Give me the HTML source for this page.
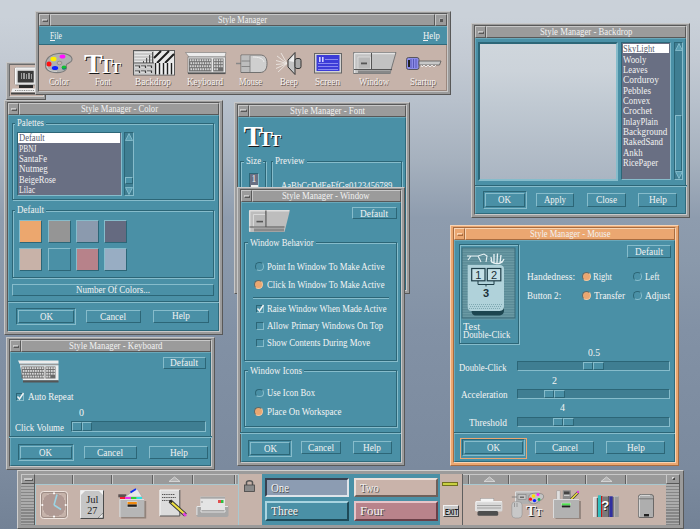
<!DOCTYPE html><html><head><meta charset="utf-8"><style>
html,body{margin:0;padding:0;width:700px;height:529px;overflow:hidden;}
body{position:relative;background:linear-gradient(to bottom,#cad1d9 0px,#cad1d9 17px,#c3cad3 60px,#b8c1cc 100px,#a6b1be 160px,#8e9cae 218px,#8a99ab 260px,#8291a5 330px,#7b8a9e 470px,#738296 529px);}
div,span,svg{position:absolute;box-sizing:border-box;}
.t{white-space:nowrap;display:block;}

</style></head><body>
<div style="left:6px;top:61.5px;width:40px;height:38px;background:#9b9b9b;border:1px solid;border-color:#c8c8c8 #585858 #585858 #c8c8c8;"></div>
<div style="left:8.5px;top:63.5px;width:35px;height:33.5px;background:#c6b3aa;border:1px solid;border-color:#6a6a6a #d0d0d0 #d0d0d0 #6a6a6a;"></div>
<svg style="left:9px;top:66px;overflow:visible" width="30" height="30" viewBox="0 0 30 30">
<rect x="6" y="1.5" width="21" height="17.5" rx="1.5" fill="#e2e2e2" stroke="#777" stroke-width="0.7"/>
<path d="M6.5 18.5 V2 H26.5" stroke="#fafafa" stroke-width="1" fill="none"/>
<rect x="8.7" y="4.8" width="16" height="11.7" fill="#3a3a3a"/>
<g fill="#9a9a9a"><rect x="12" y="7" width="1" height="6"/><rect x="14" y="7" width="2" height="6"/><rect x="17" y="8" width="1" height="5"/><rect x="19" y="7" width="2" height="6"/><rect x="22" y="8" width="1" height="5"/></g>
<rect x="10" y="19" width="14" height="3" fill="#2a2a2a"/>
<path d="M3.5 22.6 H27 V26.5 H2 Z" fill="#f0f0f0"/>
<path d="M6 24.5 H25" stroke="#888" stroke-width="1" stroke-dasharray="1 0.8"/>
<rect x="2" y="26.5" width="25" height="2" fill="#444"/>
</svg>
<div style="left:35px;top:11px;width:416px;height:84px;background:#9b9b9b;border:1px solid;border-color:#c8c8c8 #585858 #585858 #c8c8c8;"></div>
<div style="left:38px;top:13px;width:410px;height:79px;background:#9b9b9b;border:1px solid;border-color:#585858 #c8c8c8 #c8c8c8 #585858;"></div>
<div style="left:39px;top:14px;width:11px;height:12px;background:#9b9b9b;border:1px solid;border-color:#c8c8c8 #585858 #585858 #c8c8c8;"></div>
<div style="left:41.5px;top:18.8px;width:6.5px;height:3px;background:#9b9b9b;border:1px solid;border-color:#c8c8c8 #585858 #585858 #c8c8c8;"></div>
<div style="left:50px;top:14px;width:385px;height:12px;background:#9b9b9b;border:1px solid;border-color:#c8c8c8 #585858 #585858 #c8c8c8;"></div>
<div style="left:435px;top:14px;width:12px;height:12px;background:#9b9b9b;border:1px solid;border-color:#c8c8c8 #585858 #585858 #c8c8c8;"></div>
<div style="left:439.5px;top:18.5px;width:3px;height:3px;background:#585858;box-shadow:-0.5px -0.5px 0 #c8c8c8;"></div>
<span id="t1" class="t" style="left:218.00px;top:15.45px;font-size:10.5px;line-height:10.5px;font-family:'Liberation Serif', serif;color:#f2f2f2;font-weight:normal;transform-origin:0 0;transform:scaleX(0.7963);">Style Manager</span>
<div style="left:39px;top:26px;width:408px;height:19px;background:#4a90a6;border-top:1px solid #6aa8ba;border-bottom:1px solid #2f6a7c;"></div>
<span id="t2" class="t" style="left:50.30px;top:30.65px;font-size:10.5px;line-height:10.5px;font-family:'Liberation Serif', serif;color:#f4f4f4;font-weight:normal;transform-origin:0 0;transform:scaleX(0.7342);">File</span>
<div style="left:50.3px;top:40px;width:5px;height:1px;background:#f2f2f2;"></div>
<span id="t3" class="t" style="left:423.00px;top:30.65px;font-size:10.5px;line-height:10.5px;font-family:'Liberation Serif', serif;color:#f4f4f4;font-weight:normal;transform-origin:0 0;transform:scaleX(0.8324);">Help</span>
<div style="left:423px;top:40px;width:5px;height:1px;background:#f2f2f2;"></div>
<div style="left:39px;top:45px;width:408px;height:46px;background:#c6b3aa;border-right:1px solid #9a877e;border-bottom:1px solid #9a877e;"></div>
<span id="t4" class="t" style="left:49.00px;top:77.20px;font-size:10px;line-height:10px;font-family:'Liberation Serif', serif;color:#f6f2f0;font-weight:normal;transform-origin:0 0;transform:scaleX(0.8779);text-shadow:0.8px 0.8px 0 #6a5a54;">Color</span>
<span id="t5" class="t" style="left:95.00px;top:77.20px;font-size:10px;line-height:10px;font-family:'Liberation Serif', serif;color:#f6f2f0;font-weight:normal;transform-origin:0 0;transform:scaleX(0.8722);text-shadow:0.8px 0.8px 0 #6a5a54;">Font</span>
<span id="t6" class="t" style="left:135.00px;top:77.20px;font-size:10px;line-height:10px;font-family:'Liberation Serif', serif;color:#f6f2f0;font-weight:normal;transform-origin:0 0;transform:scaleX(0.9257);text-shadow:0.8px 0.8px 0 #6a5a54;">Backdrop</span>
<span id="t7" class="t" style="left:187.00px;top:77.20px;font-size:10px;line-height:10px;font-family:'Liberation Serif', serif;color:#f6f2f0;font-weight:normal;transform-origin:0 0;transform:scaleX(0.9128);text-shadow:0.8px 0.8px 0 #6a5a54;">Keyboard</span>
<span id="t8" class="t" style="left:239.00px;top:77.20px;font-size:10px;line-height:10px;font-family:'Liberation Serif', serif;color:#f6f2f0;font-weight:normal;transform-origin:0 0;transform:scaleX(0.8445);text-shadow:0.8px 0.8px 0 #6a5a54;">Mouse</span>
<span id="t9" class="t" style="left:279.50px;top:77.20px;font-size:10px;line-height:10px;font-family:'Liberation Serif', serif;color:#f6f2f0;font-weight:normal;transform-origin:0 0;transform:scaleX(0.8760);text-shadow:0.8px 0.8px 0 #6a5a54;">Beep</span>
<span id="t10" class="t" style="left:314.50px;top:77.20px;font-size:10px;line-height:10px;font-family:'Liberation Serif', serif;color:#f6f2f0;font-weight:normal;transform-origin:0 0;transform:scaleX(0.9185);text-shadow:0.8px 0.8px 0 #6a5a54;">Screen</span>
<span id="t11" class="t" style="left:359.00px;top:77.20px;font-size:10px;line-height:10px;font-family:'Liberation Serif', serif;color:#f6f2f0;font-weight:normal;transform-origin:0 0;transform:scaleX(0.8811);text-shadow:0.8px 0.8px 0 #6a5a54;">Window</span>
<span id="t12" class="t" style="left:410.00px;top:77.20px;font-size:10px;line-height:10px;font-family:'Liberation Serif', serif;color:#f6f2f0;font-weight:normal;transform-origin:0 0;transform:scaleX(0.8999);text-shadow:0.8px 0.8px 0 #6a5a54;">Startup</span>
<svg style="left:44px;top:52px;overflow:visible" width="30" height="22" viewBox="0 0 30 22">
<path d="M14 1.5 C22 0.8 28.5 3.5 28 8 C27.6 10.5 24 10.8 22.5 12.5 C21.5 13.8 23.5 15.5 22 17.5 C20 20 15 21 10 20.5 C4 20 1 17 1.5 12 C2 6 7 2 14 1.5 Z" fill="#b0b0b0" stroke="#7a7a7a" stroke-width="1.1"/>
<path d="M3 14 C3 18 8 19.5 13 19.5" stroke="#d8d8d8" stroke-width="0.8" fill="none"/>
<ellipse cx="15.5" cy="11" rx="2.4" ry="1.8" fill="#c6b3aa" stroke="#7a7a7a" stroke-width="0.6"/>
<ellipse cx="9.5" cy="7" rx="3" ry="2.3" fill="#ffee00"/>
<ellipse cx="18.5" cy="4.6" rx="2.9" ry="2" fill="#ff10ff"/>
<ellipse cx="5" cy="12" rx="2.5" ry="2.5" fill="#ff1010"/>
<ellipse cx="11" cy="16" rx="3.2" ry="2.1" fill="#1020ff"/>
<ellipse cx="20" cy="15.5" rx="2.4" ry="2" fill="#10c030"/>
<path d="M18 16.5 C19 17.5 21 17.5 22 16" stroke="#1a5a9a" stroke-width="0.8" fill="none"/>
</svg>
<svg style="left:83px;top:50px;overflow:visible" width="42" height="26" viewBox="0 0 42 26"><text x="2" y="24" font-family="Liberation Serif" font-weight="bold" font-size="28" fill="#1a1a1a">T</text><text x="17.5" y="24" font-family="Liberation Serif" font-weight="bold" font-size="20" fill="#1a1a1a">T</text><text x="29" y="24" font-family="Liberation Serif" font-weight="bold" font-size="15" fill="#1a1a1a">T</text><text x="1" y="23" font-family="Liberation Serif" font-weight="bold" font-size="28" fill="#ffffff">T</text><text x="16.5" y="23" font-family="Liberation Serif" font-weight="bold" font-size="20" fill="#ffffff">T</text><text x="28" y="23" font-family="Liberation Serif" font-weight="bold" font-size="15" fill="#ffffff">T</text></svg>
<svg style="left:132.5px;top:50.3px;overflow:visible" width="42" height="25.5" viewBox="0 0 42 25.5">
<rect x="0.5" y="0.5" width="41" height="24.5" fill="#c4c4c4" stroke="#5a5a5a"/>
<rect x="1" y="1" width="20" height="12" fill="#c8c8c8"/>
<g stroke="#e6e6e6" stroke-width="1"><path d="M1.5 2.5 H20 M1.5 5.5 H20 M1.5 8.5 H20 M1.5 11.5 H20"/></g>
<g fill="#555"><rect x="10" y="11" width="1" height="2"/><rect x="13" y="8" width="1.2" height="5"/><rect x="16" y="5" width="1.2" height="8"/><rect x="19" y="2" width="1.2" height="11"/></g>
<rect x="1" y="12.6" width="20" height="1" fill="#444"/>
<rect x="1" y="13.6" width="20" height="11" fill="#cacaca"/>
<g stroke="#3a3a3a" stroke-width="1.1" fill="none"><path d="M2 16 H6.5 V18 M8 16 H12.5 V18 M14 16 H18.5 V18 M2 21 H6.5 V23 M8 21 H12.5 V23 M14 21 H18.5 V23"/></g>
<g stroke="#f0f0f0" stroke-width="0.8" fill="none"><path d="M2 17 H5.5 M8 17 H11.5 M14 17 H17.5 M2 22 H5.5 M8 22 H11.5 M14 22 H17.5"/></g>
<rect x="21" y="1" width="20" height="12" fill="#e8e8e8"/>
<g stroke="#1e1e1e" stroke-width="2"><path d="M21 8 L28 1 M24 13 L36 1 M32 13 L41 4"/></g>
<rect x="21" y="13" width="20" height="11.5" fill="#f0f0f0"/>
<g stroke="#1e1e1e" stroke-width="1.4"><path d="M22.5 13 V24.5 M26.5 13 V24.5 M30.5 13 V24.5 M34.5 13 V24.5 M38.5 13 V24.5"/></g>
</svg>
<svg style="left:184.5px;top:52px;overflow:visible" width="42" height="23" viewBox="0 0 42 23">
<path d="M0.5 0.5 H41 L40 5 H4 Z" fill="#ececec" stroke="#777" stroke-width="0.6"/>
<rect x="3" y="5" width="37.5" height="16" fill="#e8e8e8" stroke="#666" stroke-width="0.6"/>
<rect x="4" y="6.5" width="22.5" height="13" fill="#6e6e6e"/>
<rect x="28.2" y="6.5" width="10.3" height="13" fill="#6e6e6e"/>
<g fill="#d4d4d4"><rect x="4.80" y="7.20" width="1.6" height="2"/><rect x="7.20" y="7.20" width="1.6" height="2"/><rect x="9.60" y="7.20" width="1.6" height="2"/><rect x="12.00" y="7.20" width="1.6" height="2"/><rect x="14.40" y="7.20" width="1.6" height="2"/><rect x="16.80" y="7.20" width="1.6" height="2"/><rect x="19.20" y="7.20" width="1.6" height="2"/><rect x="21.60" y="7.20" width="1.6" height="2"/><rect x="24.00" y="7.20" width="1.6" height="2"/><rect x="29.00" y="7.20" width="1.6" height="2"/><rect x="31.40" y="7.20" width="1.6" height="2"/><rect x="33.80" y="7.20" width="1.6" height="2"/><rect x="36.20" y="7.20" width="1.6" height="2"/><rect x="5.40" y="10.20" width="1.6" height="2"/><rect x="7.80" y="10.20" width="1.6" height="2"/><rect x="10.20" y="10.20" width="1.6" height="2"/><rect x="12.60" y="10.20" width="1.6" height="2"/><rect x="15.00" y="10.20" width="1.6" height="2"/><rect x="17.40" y="10.20" width="1.6" height="2"/><rect x="19.80" y="10.20" width="1.6" height="2"/><rect x="22.20" y="10.20" width="1.6" height="2"/><rect x="24.60" y="10.20" width="1.6" height="2"/><rect x="29.00" y="10.20" width="1.6" height="2"/><rect x="31.40" y="10.20" width="1.6" height="2"/><rect x="33.80" y="10.20" width="1.6" height="2"/><rect x="36.20" y="10.20" width="1.6" height="2"/><rect x="4.80" y="13.20" width="1.6" height="2"/><rect x="7.20" y="13.20" width="1.6" height="2"/><rect x="9.60" y="13.20" width="1.6" height="2"/><rect x="12.00" y="13.20" width="1.6" height="2"/><rect x="14.40" y="13.20" width="1.6" height="2"/><rect x="16.80" y="13.20" width="1.6" height="2"/><rect x="19.20" y="13.20" width="1.6" height="2"/><rect x="21.60" y="13.20" width="1.6" height="2"/><rect x="24.00" y="13.20" width="1.6" height="2"/><rect x="29.00" y="13.20" width="1.6" height="2"/><rect x="31.40" y="13.20" width="1.6" height="2"/><rect x="33.80" y="13.20" width="1.6" height="2"/><rect x="36.20" y="13.20" width="1.6" height="2"/><rect x="5.40" y="16.20" width="1.6" height="2"/><rect x="7.80" y="16.20" width="1.6" height="2"/><rect x="10.20" y="16.20" width="1.6" height="2"/><rect x="12.60" y="16.20" width="1.6" height="2"/><rect x="15.00" y="16.20" width="1.6" height="2"/><rect x="17.40" y="16.20" width="1.6" height="2"/><rect x="19.80" y="16.20" width="1.6" height="2"/><rect x="22.20" y="16.20" width="1.6" height="2"/><rect x="24.60" y="16.20" width="1.6" height="2"/><rect x="29.00" y="16.20" width="1.6" height="2"/><rect x="31.40" y="16.20" width="1.6" height="2"/></g>
<rect x="3" y="20.5" width="37.5" height="1.6" fill="#555"/>
</svg>
<svg style="left:235.5px;top:53.5px;overflow:visible" width="32" height="20" viewBox="0 0 32 20">
<path d="M0 9.5 H6" stroke="#888" stroke-width="1.5"/>
<path d="M5 1 H24 C29 1 31 4 31 9.5 C31 15 29 18.5 24 18.5 H5 Z" fill="#cfcfcf" stroke="#666" stroke-width="0.9"/>
<path d="M5.5 1.5 H14 V18 H5.5 Z" fill="#bdbdbd"/>
<path d="M5.5 7 H14 M5.5 12.5 H14 M14 1.5 V18" stroke="#777" stroke-width="0.8" fill="none"/>
<path d="M17 3 C22 3 27 4 28 8" stroke="#eee" stroke-width="1" fill="none"/>
</svg>
<svg style="left:276px;top:52px;overflow:visible" width="26" height="23" viewBox="0 0 26 23">
<g stroke="#f0ece8" stroke-width="0.8" fill="none"><path d="M11 11.5 L1 4 M11 11.5 L0 8.5 M11 11.5 L0 12.5 M11 11.5 L0 16.5 M11 11.5 L2 20 M11 11.5 L5 1"/></g>
<path d="M12 8 L19 0.5 L19 22.5 L12 15 Z" fill="#c4c4c4" stroke="#333" stroke-width="1"/>
<path d="M13 9 L18 3 L18 10 Z" fill="#eee"/>
<rect x="19" y="6.5" width="6" height="10" rx="2" fill="#aaa" stroke="#333" stroke-width="1"/>
</svg>
<svg style="left:313.5px;top:52.5px;overflow:visible" width="28" height="20" viewBox="0 0 28 20">
<rect x="0.5" y="0.5" width="27" height="19.5" fill="#d4d4d4" stroke="#666"/>
<rect x="2.5" y="2" width="23" height="16" fill="#3c3cd8"/>
<g fill="#d0d0ff"><rect x="5" y="4" width="1.6" height="5"/><rect x="8" y="4" width="1.6" height="5"/></g>
<g fill="#8a8af0"><rect x="11" y="6" width="13" height="1"/><rect x="4" y="10" width="20" height="1"/><rect x="4" y="13" width="20" height="1"/><rect x="4" y="16" width="20" height="1"/></g>
</svg>
<svg style="left:352.5px;top:52px;overflow:visible" width="44" height="22" viewBox="0 0 44 22">
<path d="M0.5 0.5 H43 L37 21.5 H0.5 Z" fill="#c2c2c2" stroke="#777" stroke-width="1"/>
<path d="M1.5 1.5 H42 M1.5 1.5 V21" stroke="#e4e4e4" stroke-width="1.5"/>
<path d="M5 5 H17.5 V17 H5 Z" fill="#b8b8b8" stroke="#e0e0e0" stroke-width="0.8"/>
<rect x="8" y="10.5" width="6" height="1.8" fill="#555"/>
<rect x="18" y="1" width="1" height="16.5" fill="#555"/>
<rect x="1" y="17" width="38" height="1" fill="#555"/>
<rect x="5" y="18.5" width="33" height="3" fill="#888"/>
</svg>
<svg style="left:406px;top:56.5px;overflow:visible" width="36" height="13" viewBox="0 0 36 13">
<rect x="0.5" y="0.5" width="12.5" height="12" rx="2" fill="#8c8ce8" stroke="#444" stroke-width="0.8"/>
<g stroke="#5858b8" stroke-width="1"><path d="M5 2 V11 M7.5 2 V11 M10 2 V11"/></g>
<rect x="2" y="3" width="2" height="7" fill="#222"/>
<path d="M13 4 H35 L33.5 8 H13 Z" fill="#c8c8c8" stroke="#555" stroke-width="0.8"/>
<path d="M15 8 L16 10 L18 8 L20 10 L22 8 L24 10 L26 8 L28 10 L30 8" stroke="#f0f0f0" fill="none" stroke-width="0.9"/>
</svg>
<div style="left:471px;top:23px;width:219px;height:195px;background:#9b9b9b;border:1px solid;border-color:#c8c8c8 #585858 #585858 #c8c8c8;"></div>
<div style="left:474px;top:25px;width:213px;height:190px;background:#9b9b9b;border:1px solid;border-color:#585858 #c8c8c8 #c8c8c8 #585858;"></div>
<div style="left:475px;top:26px;width:11px;height:11.5px;background:#9b9b9b;border:1px solid;border-color:#c8c8c8 #585858 #585858 #c8c8c8;"></div>
<div style="left:477.5px;top:30.55px;width:6.5px;height:3px;background:#9b9b9b;border:1px solid;border-color:#c8c8c8 #585858 #585858 #c8c8c8;"></div>
<div style="left:486px;top:26px;width:200px;height:11.5px;background:#9b9b9b;border:1px solid;border-color:#c8c8c8 #585858 #585858 #c8c8c8;"></div>
<span id="t13" class="t" style="left:539.75px;top:27.20px;font-size:10.5px;line-height:10.5px;font-family:'Liberation Serif', serif;color:#f2f2f2;font-weight:normal;transform-origin:0 0;transform:scaleX(0.8326);">Style Manager - Backdrop</span>
<div style="left:475px;top:37.5px;width:211px;height:176.5px;background:#4a90a6;"></div>
<div style="left:475px;top:37.5px;width:211px;height:176.5px;border:1px solid;border-color:#6aa8ba #2f6a7c #2f6a7c #6aa8ba;"></div>
<div style="left:478px;top:41.5px;width:139.5px;height:139.5px;border:2px solid;border-color:#2c6677 #86bccb #86bccb #2c6677;"></div>
<div style="left:480px;top:43.5px;width:135.5px;height:135.5px;background:linear-gradient(to bottom,#cfd6dc 0%,#ccd3da 20%,#c0c9d2 45%,#b4bec9 75%,#aab5c2 100%);"></div>
<div style="left:620.5px;top:42px;width:50.5px;height:138px;background:#696f83;border:1px solid;border-color:#2c6677 #86bccb #86bccb #2c6677;"></div>
<div style="left:622.5px;top:44px;width:46.2px;height:8.8px;background:#ffffff;"></div>
<span id="t14" class="t" style="left:622.50px;top:44.15px;font-size:10.5px;line-height:10.5px;font-family:'Liberation Serif', serif;color:#555a6c;font-weight:normal;transform-origin:0 0;transform:scaleX(0.8058);">SkyLight</span>
<span id="t15" class="t" style="left:622.50px;top:54.50px;font-size:10.5px;line-height:10.5px;font-family:'Liberation Serif', serif;color:#f2f2f2;font-weight:normal;transform-origin:0 0;transform:scaleX(0.8432);">Wooly</span>
<span id="t16" class="t" style="left:622.50px;top:64.85px;font-size:10.5px;line-height:10.5px;font-family:'Liberation Serif', serif;color:#f2f2f2;font-weight:normal;transform-origin:0 0;transform:scaleX(0.8240);">Leaves</span>
<span id="t17" class="t" style="left:622.50px;top:75.20px;font-size:10.5px;line-height:10.5px;font-family:'Liberation Serif', serif;color:#f2f2f2;font-weight:normal;transform-origin:0 0;transform:scaleX(0.8944);">Corduroy</span>
<span id="t18" class="t" style="left:622.50px;top:85.55px;font-size:10.5px;line-height:10.5px;font-family:'Liberation Serif', serif;color:#f2f2f2;font-weight:normal;transform-origin:0 0;transform:scaleX(0.8570);">Pebbles</span>
<span id="t19" class="t" style="left:622.50px;top:95.90px;font-size:10.5px;line-height:10.5px;font-family:'Liberation Serif', serif;color:#f2f2f2;font-weight:normal;transform-origin:0 0;transform:scaleX(0.8264);">Convex</span>
<span id="t20" class="t" style="left:622.50px;top:106.25px;font-size:10.5px;line-height:10.5px;font-family:'Liberation Serif', serif;color:#f2f2f2;font-weight:normal;transform-origin:0 0;transform:scaleX(0.8722);">Crochet</span>
<span id="t21" class="t" style="left:622.50px;top:116.60px;font-size:10.5px;line-height:10.5px;font-family:'Liberation Serif', serif;color:#f2f2f2;font-weight:normal;transform-origin:0 0;transform:scaleX(0.8107);">InlayPlain</span>
<span id="t22" class="t" style="left:622.50px;top:126.95px;font-size:10.5px;line-height:10.5px;font-family:'Liberation Serif', serif;color:#f2f2f2;font-weight:normal;transform-origin:0 0;transform:scaleX(0.8631);">Background</span>
<span id="t23" class="t" style="left:622.50px;top:137.30px;font-size:10.5px;line-height:10.5px;font-family:'Liberation Serif', serif;color:#f2f2f2;font-weight:normal;transform-origin:0 0;transform:scaleX(0.8363);">RakedSand</span>
<span id="t24" class="t" style="left:622.50px;top:147.65px;font-size:10.5px;line-height:10.5px;font-family:'Liberation Serif', serif;color:#f2f2f2;font-weight:normal;transform-origin:0 0;transform:scaleX(0.8396);">Ankh</span>
<span id="t25" class="t" style="left:622.50px;top:158.00px;font-size:10.5px;line-height:10.5px;font-family:'Liberation Serif', serif;color:#f2f2f2;font-weight:normal;transform-origin:0 0;transform:scaleX(0.8110);">RicePaper</span>
<div style="left:673.5px;top:42px;width:9.5px;height:138px;background:#3f7e92;border:1px solid;border-color:#2c6677 #86bccb #86bccb #2c6677;"></div>
<svg style="left:674.5px;top:43px;overflow:visible" width="8" height="8" viewBox="0 0 8 8"><path d="M0.5 7.5 L4 0.5 L7.5 7.5 Z" fill="#5a9fb3" stroke="#8cc2d0" stroke-width="0.8"/></svg>
<div style="left:674.5px;top:115px;width:7.5px;height:56px;background:#4a90a6;border:1px solid;border-color:#86bccb #2c6677 #2c6677 #86bccb;"></div>
<svg style="left:674.5px;top:171px;overflow:visible" width="8" height="8" viewBox="0 0 8 8"><path d="M0.5 0.5 L4 7.5 L7.5 0.5 Z" fill="#5a9fb3" stroke="#8cc2d0" stroke-width="0.8"/></svg>
<div style="left:475px;top:184.5px;width:212px;height:2px;border-top:1px solid #2c6677;border-bottom:1px solid #86bccb;"></div>
<div style="left:483px;top:191px;width:43.5px;height:17.8px;border:1px solid;border-color:#2c6677 #86bccb #86bccb #2c6677;"></div>
<div style="left:485px;top:193px;width:39.5px;height:13.8px;background:#4a90a6;border:1px solid;border-color:#86bccb #2c6677 #2c6677 #86bccb;"></div>
<span id="t26" class="t" style="left:498.25px;top:195.35px;font-size:10.5px;line-height:10.5px;font-family:'Liberation Serif', serif;color:#f2f2f2;font-weight:normal;transform-origin:0 0;transform:scaleX(0.8568);">OK</span>
<div style="left:536px;top:193px;width:38px;height:13.5px;background:#4a90a6;border:1px solid;border-color:#86bccb #2c6677 #2c6677 #86bccb;"></div>
<span id="t27" class="t" style="left:544.00px;top:195.20px;font-size:10.5px;line-height:10.5px;font-family:'Liberation Serif', serif;color:#f2f2f2;font-weight:normal;transform-origin:0 0;transform:scaleX(0.8381);">Apply</span>
<div style="left:587px;top:193px;width:38.5px;height:13.5px;background:#4a90a6;border:1px solid;border-color:#86bccb #2c6677 #2c6677 #86bccb;"></div>
<span id="t28" class="t" style="left:595.75px;top:195.20px;font-size:10.5px;line-height:10.5px;font-family:'Liberation Serif', serif;color:#f2f2f2;font-weight:normal;transform-origin:0 0;transform:scaleX(0.8779);">Close</span>
<div style="left:638px;top:193px;width:39px;height:13.5px;background:#4a90a6;border:1px solid;border-color:#86bccb #2c6677 #2c6677 #86bccb;"></div>
<span id="t29" class="t" style="left:648.50px;top:195.20px;font-size:10.5px;line-height:10.5px;font-family:'Liberation Serif', serif;color:#f2f2f2;font-weight:normal;transform-origin:0 0;transform:scaleX(0.8814);">Help</span>
<div style="left:4px;top:100px;width:219px;height:234.5px;background:#9b9b9b;border:1px solid;border-color:#c8c8c8 #585858 #585858 #c8c8c8;"></div>
<div style="left:7px;top:102px;width:213px;height:229.5px;background:#9b9b9b;border:1px solid;border-color:#585858 #c8c8c8 #c8c8c8 #585858;"></div>
<div style="left:8px;top:103px;width:11px;height:12px;background:#9b9b9b;border:1px solid;border-color:#c8c8c8 #585858 #585858 #c8c8c8;"></div>
<div style="left:10.5px;top:107.8px;width:6.5px;height:3px;background:#9b9b9b;border:1px solid;border-color:#c8c8c8 #585858 #585858 #c8c8c8;"></div>
<div style="left:19px;top:103px;width:200px;height:12px;background:#9b9b9b;border:1px solid;border-color:#c8c8c8 #585858 #585858 #c8c8c8;"></div>
<span id="t30" class="t" style="left:80.50px;top:104.45px;font-size:10.5px;line-height:10.5px;font-family:'Liberation Serif', serif;color:#f2f2f2;font-weight:normal;transform-origin:0 0;transform:scaleX(0.8175);">Style Manager - Color</span>
<div style="left:8px;top:115px;width:211px;height:215.5px;background:#4a90a6;"></div>
<div style="left:8px;top:115px;width:211px;height:215.5px;border:1px solid;border-color:#6aa8ba #2f6a7c #2f6a7c #6aa8ba;"></div>
<div style="left:12px;top:122.5px;width:201.5px;height:77px;border:1px solid #2c6677;box-shadow:1px 1px 0 #86bccb, inset 1px 1px 0 #86bccb;"></div>
<div style="left:15px;top:118.5px;width:31px;height:8px;background:#4a90a6;"></div>
<span id="t31" class="t" style="left:17.00px;top:117.95px;font-size:10.5px;line-height:10.5px;font-family:'Liberation Serif', serif;color:#f2f2f2;font-weight:normal;transform-origin:0 0;transform:scaleX(0.8264);">Palettes</span>
<div style="left:17px;top:132px;width:105px;height:64px;background:#696f83;border:1px solid;border-color:#2c6677 #86bccb #86bccb #2c6677;"></div>
<div style="left:18px;top:133px;width:102px;height:9.5px;background:#ffffff;"></div>
<span id="t32" class="t" style="left:18.75px;top:133.05px;font-size:10.5px;line-height:10.5px;font-family:'Liberation Serif', serif;color:#555a6c;font-weight:normal;transform-origin:0 0;transform:scaleX(0.8175);">Default</span>
<span id="t33" class="t" style="left:18.75px;top:143.50px;font-size:10.5px;line-height:10.5px;font-family:'Liberation Serif', serif;color:#f2f2f2;font-weight:normal;transform-origin:0 0;transform:scaleX(0.7138);">PBNJ</span>
<span id="t34" class="t" style="left:18.75px;top:153.95px;font-size:10.5px;line-height:10.5px;font-family:'Liberation Serif', serif;color:#f2f2f2;font-weight:normal;transform-origin:0 0;transform:scaleX(0.8277);">SantaFe</span>
<span id="t35" class="t" style="left:18.75px;top:164.40px;font-size:10.5px;line-height:10.5px;font-family:'Liberation Serif', serif;color:#f2f2f2;font-weight:normal;transform-origin:0 0;transform:scaleX(0.8499);">Nutmeg</span>
<span id="t36" class="t" style="left:18.75px;top:174.85px;font-size:10.5px;line-height:10.5px;font-family:'Liberation Serif', serif;color:#f2f2f2;font-weight:normal;transform-origin:0 0;transform:scaleX(0.8077);">BeigeRose</span>
<span id="t37" class="t" style="left:18.75px;top:185.30px;font-size:10.5px;line-height:10.5px;font-family:'Liberation Serif', serif;color:#f2f2f2;font-weight:normal;transform-origin:0 0;transform:scaleX(0.7531);">Lilac</span>
<div style="left:124.2px;top:132px;width:9.6px;height:64px;background:#3f7e92;border:1px solid;border-color:#2c6677 #86bccb #86bccb #2c6677;"></div>
<svg style="left:125.2px;top:133px;overflow:visible" width="8" height="8" viewBox="0 0 8 8"><path d="M0.5 7.5 L4 0.5 L7.5 7.5 Z" fill="#5a9fb3" stroke="#8cc2d0" stroke-width="0.8"/></svg>
<div style="left:125.2px;top:176.5px;width:7.6px;height:7px;background:#4a90a6;border:1px solid;border-color:#86bccb #2c6677 #2c6677 #86bccb;"></div>
<svg style="left:125.2px;top:187px;overflow:visible" width="8" height="8" viewBox="0 0 8 8"><path d="M0.5 0.5 L4 7.5 L7.5 0.5 Z" fill="#5a9fb3" stroke="#8cc2d0" stroke-width="0.8"/></svg>
<div style="left:12px;top:209.5px;width:201.5px;height:68px;border:1px solid #2c6677;box-shadow:1px 1px 0 #86bccb, inset 1px 1px 0 #86bccb;"></div>
<div style="left:15px;top:205.5px;width:31px;height:8px;background:#4a90a6;"></div>
<span id="t38" class="t" style="left:17.00px;top:204.95px;font-size:10.5px;line-height:10.5px;font-family:'Liberation Serif', serif;color:#f2f2f2;font-weight:normal;transform-origin:0 0;transform:scaleX(0.8571);">Default</span>
<div style="left:19px;top:219.5px;width:23px;height:23px;background:#eca76e;border:1px solid;border-color:#86bccb #2c6677 #2c6677 #86bccb;"></div>
<div style="left:19px;top:248px;width:23px;height:23px;background:#c8b2a8;border:1px solid;border-color:#86bccb #2c6677 #2c6677 #86bccb;"></div>
<div style="left:47.5px;top:219.5px;width:23px;height:23px;background:#959595;border:1px solid;border-color:#86bccb #2c6677 #2c6677 #86bccb;"></div>
<div style="left:47.5px;top:248px;width:23px;height:23px;background:#4a90a6;border:1px solid;border-color:#86bccb #2c6677 #2c6677 #86bccb;"></div>
<div style="left:76px;top:219.5px;width:23px;height:23px;background:#8b9aae;border:1px solid;border-color:#86bccb #2c6677 #2c6677 #86bccb;"></div>
<div style="left:76px;top:248px;width:23px;height:23px;background:#b7828a;border:1px solid;border-color:#86bccb #2c6677 #2c6677 #86bccb;"></div>
<div style="left:104px;top:219.5px;width:23px;height:23px;background:#656a80;border:1px solid;border-color:#86bccb #2c6677 #2c6677 #86bccb;"></div>
<div style="left:104px;top:248px;width:23px;height:23px;background:#98adc3;border:1px solid;border-color:#86bccb #2c6677 #2c6677 #86bccb;"></div>
<div style="left:12px;top:283.5px;width:201.5px;height:12.5px;background:#4a90a6;border:1px solid;border-color:#86bccb #2c6677 #2c6677 #86bccb;"></div>
<span id="t39" class="t" style="left:75.75px;top:285.20px;font-size:10.5px;line-height:10.5px;font-family:'Liberation Serif', serif;color:#f2f2f2;font-weight:normal;transform-origin:0 0;transform:scaleX(0.8543);">Number Of Colors...</span>
<div style="left:8px;top:300.5px;width:211px;height:2px;border-top:1px solid #2c6677;border-bottom:1px solid #86bccb;"></div>
<div style="left:16px;top:307.5px;width:60px;height:17.5px;border:1px solid;border-color:#2c6677 #86bccb #86bccb #2c6677;"></div>
<div style="left:18px;top:309.5px;width:56px;height:13.5px;background:#4a90a6;border:1px solid;border-color:#86bccb #2c6677 #2c6677 #86bccb;"></div>
<span id="t40" class="t" style="left:39.50px;top:311.70px;font-size:10.5px;line-height:10.5px;font-family:'Liberation Serif', serif;color:#f2f2f2;font-weight:normal;transform-origin:0 0;transform:scaleX(0.8568);">OK</span>
<div style="left:85.5px;top:309.5px;width:55.5px;height:13.5px;background:#4a90a6;border:1px solid;border-color:#86bccb #2c6677 #2c6677 #86bccb;"></div>
<span id="t41" class="t" style="left:100.25px;top:311.70px;font-size:10.5px;line-height:10.5px;font-family:'Liberation Serif', serif;color:#f2f2f2;font-weight:normal;transform-origin:0 0;transform:scaleX(0.8917);">Cancel</span>
<div style="left:153px;top:309.5px;width:55.5px;height:13px;background:#4a90a6;border:1px solid;border-color:#86bccb #2c6677 #2c6677 #86bccb;"></div>
<span id="t42" class="t" style="left:171.75px;top:311.45px;font-size:10.5px;line-height:10.5px;font-family:'Liberation Serif', serif;color:#f2f2f2;font-weight:normal;transform-origin:0 0;transform:scaleX(0.8814);">Help</span>
<div style="left:233.5px;top:101.5px;width:176px;height:192px;background:#9b9b9b;border:1px solid;border-color:#c8c8c8 #585858 #585858 #c8c8c8;"></div>
<div style="left:236.5px;top:103.5px;width:170px;height:187px;background:#9b9b9b;border:1px solid;border-color:#585858 #c8c8c8 #c8c8c8 #585858;"></div>
<div style="left:237.5px;top:104.5px;width:11px;height:12px;background:#9b9b9b;border:1px solid;border-color:#c8c8c8 #585858 #585858 #c8c8c8;"></div>
<div style="left:240.0px;top:109.3px;width:6.5px;height:3px;background:#9b9b9b;border:1px solid;border-color:#c8c8c8 #585858 #585858 #c8c8c8;"></div>
<div style="left:248.5px;top:104.5px;width:157px;height:12px;background:#9b9b9b;border:1px solid;border-color:#c8c8c8 #585858 #585858 #c8c8c8;"></div>
<span id="t43" class="t" style="left:289.50px;top:105.95px;font-size:10.5px;line-height:10.5px;font-family:'Liberation Serif', serif;color:#f2f2f2;font-weight:normal;transform-origin:0 0;transform:scaleX(0.8377);">Style Manager - Font</span>
<div style="left:237.5px;top:116.5px;width:168px;height:173px;background:#4a90a6;"></div>
<div style="left:237.5px;top:116.5px;width:168px;height:173px;border:1px solid;border-color:#6aa8ba #2f6a7c #2f6a7c #6aa8ba;"></div>
<svg style="left:243px;top:121px;overflow:visible" width="42" height="27" viewBox="0 0 42 27"><text x="1.5" y="25.5" font-family="Liberation Serif" font-weight="bold" font-size="29" fill="#1a1a1a">T</text><text x="16.5" y="25.5" font-family="Liberation Serif" font-weight="bold" font-size="21.5" fill="#1a1a1a">T</text><text x="28.5" y="25.5" font-family="Liberation Serif" font-weight="bold" font-size="16" fill="#1a1a1a">T</text><text x="0.5" y="24.5" font-family="Liberation Serif" font-weight="bold" font-size="29" fill="#ffffff">T</text><text x="15.5" y="24.5" font-family="Liberation Serif" font-weight="bold" font-size="21.5" fill="#ffffff">T</text><text x="27.5" y="24.5" font-family="Liberation Serif" font-weight="bold" font-size="16" fill="#ffffff">T</text></svg>
<div style="left:240px;top:161px;width:26px;height:40px;border:1px solid #2c6677;box-shadow:1px 1px 0 #86bccb, inset 1px 1px 0 #86bccb;"></div>
<div style="left:244px;top:157px;width:19px;height:8px;background:#4a90a6;"></div>
<span id="t44" class="t" style="left:246.00px;top:156.45px;font-size:10.5px;line-height:10.5px;font-family:'Liberation Serif', serif;color:#f2f2f2;font-weight:normal;transform-origin:0 0;transform:scaleX(0.8297);">Size</span>
<div style="left:270.5px;top:161px;width:131px;height:40px;border:1px solid #2c6677;box-shadow:1px 1px 0 #86bccb, inset 1px 1px 0 #86bccb;"></div>
<div style="left:273px;top:157px;width:33.5px;height:8px;background:#4a90a6;"></div>
<span id="t45" class="t" style="left:275.00px;top:156.45px;font-size:10.5px;line-height:10.5px;font-family:'Liberation Serif', serif;color:#f2f2f2;font-weight:normal;transform-origin:0 0;transform:scaleX(0.8570);">Preview</span>
<div style="left:249px;top:173px;width:10px;height:20px;background:#696f83;border:1px solid;border-color:#2c6677 #86bccb #86bccb #2c6677;"></div>
<span id="t46" class="t" style="left:251.50px;top:174.95px;font-size:9.5px;line-height:9.5px;font-family:'Liberation Serif', serif;color:#f2f2f2;font-weight:normal;">1</span>
<div style="left:250.5px;top:184.5px;width:7px;height:3px;background:#f0f0f0;"></div>
<span id="t47" class="t" style="left:280.60px;top:181.25px;font-size:10.5px;line-height:10.5px;font-family:'Liberation Serif', serif;color:#f4f4f4;font-weight:normal;transform-origin:0 0;transform:scaleX(0.8267);">AaBbCcDdEeFfGg0123456789</span>
<div style="left:237px;top:187px;width:167.5px;height:279px;background:#9b9b9b;border:1px solid;border-color:#c8c8c8 #585858 #585858 #c8c8c8;"></div>
<div style="left:240px;top:189px;width:161.5px;height:274px;background:#9b9b9b;border:1px solid;border-color:#585858 #c8c8c8 #c8c8c8 #585858;"></div>
<div style="left:241px;top:190px;width:11px;height:12px;background:#9b9b9b;border:1px solid;border-color:#c8c8c8 #585858 #585858 #c8c8c8;"></div>
<div style="left:243.5px;top:194.8px;width:6.5px;height:3px;background:#9b9b9b;border:1px solid;border-color:#c8c8c8 #585858 #585858 #c8c8c8;"></div>
<div style="left:252px;top:190px;width:148.5px;height:12px;background:#9b9b9b;border:1px solid;border-color:#c8c8c8 #585858 #585858 #c8c8c8;"></div>
<span id="t48" class="t" style="left:282.45px;top:191.45px;font-size:10.5px;line-height:10.5px;font-family:'Liberation Serif', serif;color:#f2f2f2;font-weight:normal;transform-origin:0 0;transform:scaleX(0.8278);">Style Manager - Window</span>
<div style="left:241px;top:202px;width:159.5px;height:260px;background:#4a90a6;"></div>
<div style="left:241px;top:202px;width:159.5px;height:260px;border:1px solid;border-color:#6aa8ba #2f6a7c #2f6a7c #6aa8ba;"></div>
<svg style="left:248.5px;top:209.5px;overflow:visible" width="41" height="22" viewBox="0 0 41 22">
<path d="M0 0 H41 L35.5 22 H0 Z" fill="#bdbdbd"/>
<path d="M0.7 0.7 H40 M0.7 0.7 V21.5" stroke="#dedede" stroke-width="1.5"/>
<path d="M4.5 4.5 H16.5 V17 H4.5 Z" fill="#b8b8b8" stroke="#dcdcdc" stroke-width="0.9"/>
<rect x="7.5" y="10.8" width="6.5" height="1.6" fill="#555"/>
<rect x="16.3" y="0.5" width="1.2" height="16.5" fill="#555"/>
<rect x="0.5" y="16.5" width="35" height="1" fill="#555"/>
<rect x="5" y="18.5" width="30" height="3" fill="#8a8a8a"/>
</svg>
<div style="left:352px;top:207px;width:44.5px;height:12.3px;background:#4a90a6;border:1px solid;border-color:#86bccb #2c6677 #2c6677 #86bccb;"></div>
<span id="t49" class="t" style="left:360.25px;top:208.60px;font-size:10.5px;line-height:10.5px;font-family:'Liberation Serif', serif;color:#f2f2f2;font-weight:normal;transform-origin:0 0;transform:scaleX(0.8889);">Default</span>
<div style="left:243.8px;top:242.4px;width:153.2px;height:119.1px;border:1px solid #2c6677;box-shadow:1px 1px 0 #86bccb, inset 1px 1px 0 #86bccb;"></div>
<div style="left:248px;top:238.4px;width:67.6px;height:8px;background:#4a90a6;"></div>
<span id="t50" class="t" style="left:250.00px;top:237.85px;font-size:10.5px;line-height:10.5px;font-family:'Liberation Serif', serif;color:#f2f2f2;font-weight:normal;transform-origin:0 0;transform:scaleX(0.8275);">Window Behavior</span>
<div style="left:255px;top:262.1px;width:8.5px;height:8.5px;border-radius:50%;border:1px solid;border-color:#2c6677 #86bccb #86bccb #2c6677;"></div>
<span id="t51" class="t" style="left:266.80px;top:261.75px;font-size:10.5px;line-height:10.5px;font-family:'Liberation Serif', serif;color:#f4f4f4;font-weight:normal;transform-origin:0 0;transform:scaleX(0.8295);">Point In Window To Make Active</span>
<div style="left:254.3px;top:279.8px;width:9px;height:9px;border-radius:50%;background:#eba771;border:1px solid;border-color:#5a6a6a #f4c8a0 #f4c8a0 #5a6a6a;"></div>
<span id="t52" class="t" style="left:266.80px;top:279.75px;font-size:10.5px;line-height:10.5px;font-family:'Liberation Serif', serif;color:#f4f4f4;font-weight:normal;transform-origin:0 0;transform:scaleX(0.8261);">Click In Window To Make Active</span>
<div style="left:253px;top:296.5px;width:136px;height:2px;border-top:1px solid #2c6677;border-bottom:1px solid #86bccb;"></div>
<div style="left:255.5px;top:304.5px;width:8px;height:8px;border:1px solid;border-color:#2c6677 #86bccb #86bccb #2c6677;"></div>
<svg style="left:255.5px;top:303.5px;overflow:visible" width="9" height="9" viewBox="0 0 9 9"><path d="M1.5 4.5 L3.5 7 L7.5 1" stroke="#f4f4f4" stroke-width="1.4" fill="none"/></svg>
<span id="t53" class="t" style="left:266.80px;top:303.95px;font-size:10.5px;line-height:10.5px;font-family:'Liberation Serif', serif;color:#f4f4f4;font-weight:normal;transform-origin:0 0;transform:scaleX(0.8209);">Raise Window When Made Active</span>
<div style="left:255.5px;top:321.8px;width:8px;height:8px;border:1px solid;border-color:#2c6677 #86bccb #86bccb #2c6677;"></div>
<span id="t54" class="t" style="left:266.80px;top:321.25px;font-size:10.5px;line-height:10.5px;font-family:'Liberation Serif', serif;color:#f4f4f4;font-weight:normal;transform-origin:0 0;transform:scaleX(0.8357);">Allow Primary Windows On Top</span>
<div style="left:255.5px;top:339px;width:8px;height:8px;border:1px solid;border-color:#2c6677 #86bccb #86bccb #2c6677;"></div>
<span id="t55" class="t" style="left:266.80px;top:338.45px;font-size:10.5px;line-height:10.5px;font-family:'Liberation Serif', serif;color:#f4f4f4;font-weight:normal;transform-origin:0 0;transform:scaleX(0.8365);">Show Contents During Move</span>
<div style="left:243.8px;top:370.2px;width:153.2px;height:56.8px;border:1px solid #2c6677;box-shadow:1px 1px 0 #86bccb, inset 1px 1px 0 #86bccb;"></div>
<div style="left:248px;top:366.2px;width:56px;height:8px;background:#4a90a6;"></div>
<span id="t56" class="t" style="left:250.00px;top:365.65px;font-size:10.5px;line-height:10.5px;font-family:'Liberation Serif', serif;color:#f2f2f2;font-weight:normal;transform-origin:0 0;transform:scaleX(0.8509);">Window Icons</span>
<div style="left:255px;top:388.6px;width:8.5px;height:8.5px;border-radius:50%;border:1px solid;border-color:#2c6677 #86bccb #86bccb #2c6677;"></div>
<span id="t57" class="t" style="left:266.80px;top:388.25px;font-size:10.5px;line-height:10.5px;font-family:'Liberation Serif', serif;color:#f4f4f4;font-weight:normal;transform-origin:0 0;transform:scaleX(0.8312);">Use Icon Box</span>
<div style="left:254.3px;top:407.1px;width:9px;height:9px;border-radius:50%;background:#eba771;border:1px solid;border-color:#5a6a6a #f4c8a0 #f4c8a0 #5a6a6a;"></div>
<span id="t58" class="t" style="left:266.80px;top:407.05px;font-size:10.5px;line-height:10.5px;font-family:'Liberation Serif', serif;color:#f4f4f4;font-weight:normal;transform-origin:0 0;transform:scaleX(0.8562);">Place On Workspace</span>
<div style="left:240px;top:431.5px;width:161px;height:2px;border-top:1px solid #2c6677;border-bottom:1px solid #86bccb;"></div>
<div style="left:248px;top:440px;width:44px;height:16.5px;border:1px solid;border-color:#2c6677 #86bccb #86bccb #2c6677;"></div>
<div style="left:250px;top:442px;width:40px;height:12.5px;background:#4a90a6;border:1px solid;border-color:#86bccb #2c6677 #2c6677 #86bccb;"></div>
<span id="t59" class="t" style="left:263.50px;top:443.70px;font-size:10.5px;line-height:10.5px;font-family:'Liberation Serif', serif;color:#f2f2f2;font-weight:normal;transform-origin:0 0;transform:scaleX(0.8568);">OK</span>
<div style="left:300.5px;top:441px;width:40.5px;height:13px;background:#4a90a6;border:1px solid;border-color:#86bccb #2c6677 #2c6677 #86bccb;"></div>
<span id="t60" class="t" style="left:307.75px;top:442.95px;font-size:10.5px;line-height:10.5px;font-family:'Liberation Serif', serif;color:#f2f2f2;font-weight:normal;transform-origin:0 0;transform:scaleX(0.8917);">Cancel</span>
<div style="left:352.5px;top:441px;width:39.5px;height:13px;background:#4a90a6;border:1px solid;border-color:#86bccb #2c6677 #2c6677 #86bccb;"></div>
<span id="t61" class="t" style="left:363.25px;top:442.95px;font-size:10.5px;line-height:10.5px;font-family:'Liberation Serif', serif;color:#f2f2f2;font-weight:normal;transform-origin:0 0;transform:scaleX(0.8814);">Help</span>
<div style="left:6px;top:337px;width:208.5px;height:133px;background:#9b9b9b;border:1px solid;border-color:#c8c8c8 #585858 #585858 #c8c8c8;"></div>
<div style="left:9px;top:339px;width:202.5px;height:128px;background:#9b9b9b;border:1px solid;border-color:#585858 #c8c8c8 #c8c8c8 #585858;"></div>
<div style="left:10px;top:340px;width:11px;height:12px;background:#9b9b9b;border:1px solid;border-color:#c8c8c8 #585858 #585858 #c8c8c8;"></div>
<div style="left:12.5px;top:344.8px;width:6.5px;height:3px;background:#9b9b9b;border:1px solid;border-color:#c8c8c8 #585858 #585858 #c8c8c8;"></div>
<div style="left:21px;top:340px;width:189.5px;height:12px;background:#9b9b9b;border:1px solid;border-color:#c8c8c8 #585858 #585858 #c8c8c8;"></div>
<span id="t62" class="t" style="left:69.00px;top:341.45px;font-size:10.5px;line-height:10.5px;font-family:'Liberation Serif', serif;color:#f2f2f2;font-weight:normal;transform-origin:0 0;transform:scaleX(0.8373);">Style Manager - Keyboard</span>
<div style="left:10px;top:352px;width:200.5px;height:114px;background:#4a90a6;"></div>
<div style="left:10px;top:352px;width:200.5px;height:114px;border:1px solid;border-color:#6aa8ba #2f6a7c #2f6a7c #6aa8ba;"></div>
<svg style="left:17.5px;top:359.5px;overflow:visible" width="41" height="23" viewBox="0 0 41 23">
<path d="M0 0.5 H40.5 V3.8 H1.5 Z" fill="#ececec"/>
<rect x="2" y="3.8" width="38.5" height="1.5" fill="#999"/>
<path d="M2 5.3 H40.5 V20.5 H5 Z" fill="#eeeeee"/>
<rect x="3.5" y="6.5" width="22.8" height="12" fill="#6a6a6a"/>
<rect x="27.5" y="6.5" width="10" height="12" fill="#6a6a6a"/>
<g fill="#d8d8d8"><rect x="4.20" y="7.20" width="1.7" height="1.9"/><rect x="6.65" y="7.20" width="1.7" height="1.9"/><rect x="9.10" y="7.20" width="1.7" height="1.9"/><rect x="11.55" y="7.20" width="1.7" height="1.9"/><rect x="14.00" y="7.20" width="1.7" height="1.9"/><rect x="16.45" y="7.20" width="1.7" height="1.9"/><rect x="18.90" y="7.20" width="1.7" height="1.9"/><rect x="21.35" y="7.20" width="1.7" height="1.9"/><rect x="23.80" y="7.20" width="1.7" height="1.9"/><rect x="28.20" y="7.20" width="1.7" height="1.9"/><rect x="30.60" y="7.20" width="1.7" height="1.9"/><rect x="33.00" y="7.20" width="1.7" height="1.9"/><rect x="35.40" y="7.20" width="1.7" height="1.9"/><rect x="4.80" y="10.00" width="1.7" height="1.9"/><rect x="7.25" y="10.00" width="1.7" height="1.9"/><rect x="9.70" y="10.00" width="1.7" height="1.9"/><rect x="12.15" y="10.00" width="1.7" height="1.9"/><rect x="14.60" y="10.00" width="1.7" height="1.9"/><rect x="17.05" y="10.00" width="1.7" height="1.9"/><rect x="19.50" y="10.00" width="1.7" height="1.9"/><rect x="21.95" y="10.00" width="1.7" height="1.9"/><rect x="24.40" y="10.00" width="1.7" height="1.9"/><rect x="28.20" y="10.00" width="1.7" height="1.9"/><rect x="30.60" y="10.00" width="1.7" height="1.9"/><rect x="33.00" y="10.00" width="1.7" height="1.9"/><rect x="35.40" y="10.00" width="1.7" height="1.9"/><rect x="4.20" y="12.80" width="1.7" height="1.9"/><rect x="6.65" y="12.80" width="1.7" height="1.9"/><rect x="9.10" y="12.80" width="1.7" height="1.9"/><rect x="11.55" y="12.80" width="1.7" height="1.9"/><rect x="14.00" y="12.80" width="1.7" height="1.9"/><rect x="16.45" y="12.80" width="1.7" height="1.9"/><rect x="18.90" y="12.80" width="1.7" height="1.9"/><rect x="21.35" y="12.80" width="1.7" height="1.9"/><rect x="23.80" y="12.80" width="1.7" height="1.9"/><rect x="28.20" y="12.80" width="1.7" height="1.9"/><rect x="30.60" y="12.80" width="1.7" height="1.9"/><rect x="33.00" y="12.80" width="1.7" height="1.9"/><rect x="35.40" y="12.80" width="1.7" height="1.9"/><rect x="4.80" y="15.60" width="1.7" height="1.9"/><rect x="7.25" y="15.60" width="1.7" height="1.9"/><rect x="9.70" y="15.60" width="1.7" height="1.9"/><rect x="12.15" y="15.60" width="1.7" height="1.9"/><rect x="14.60" y="15.60" width="1.7" height="1.9"/><rect x="17.05" y="15.60" width="1.7" height="1.9"/><rect x="19.50" y="15.60" width="1.7" height="1.9"/><rect x="21.95" y="15.60" width="1.7" height="1.9"/><rect x="24.40" y="15.60" width="1.7" height="1.9"/><rect x="28.20" y="15.60" width="1.7" height="1.9"/><rect x="30.60" y="15.60" width="1.7" height="1.9"/></g>
<rect x="5" y="20.3" width="35.5" height="2.2" fill="#555"/>
</svg>
<div style="left:162.5px;top:357px;width:43.5px;height:12px;background:#4a90a6;border:1px solid;border-color:#86bccb #2c6677 #2c6677 #86bccb;"></div>
<span id="t63" class="t" style="left:170.25px;top:358.45px;font-size:10.5px;line-height:10.5px;font-family:'Liberation Serif', serif;color:#f2f2f2;font-weight:normal;transform-origin:0 0;transform:scaleX(0.8889);">Default</span>
<div style="left:16px;top:392.5px;width:8px;height:8px;border:1px solid;border-color:#2c6677 #86bccb #86bccb #2c6677;"></div>
<svg style="left:16px;top:391.5px;overflow:visible" width="9" height="9" viewBox="0 0 9 9"><path d="M1.5 4.5 L3.5 7 L7.5 1" stroke="#f4f4f4" stroke-width="1.4" fill="none"/></svg>
<span id="t64" class="t" style="left:27.50px;top:392.45px;font-size:10.5px;line-height:10.5px;font-family:'Liberation Serif', serif;color:#f4f4f4;font-weight:normal;transform-origin:0 0;transform:scaleX(0.8602);">Auto Repeat</span>
<span id="t65" class="t" style="left:78.50px;top:407.95px;font-size:10.5px;line-height:10.5px;font-family:'Liberation Serif', serif;color:#f4f4f4;font-weight:normal;transform-origin:0 0;transform:scaleX(0.9524);">0</span>
<span id="t66" class="t" style="left:15.00px;top:423.25px;font-size:10.5px;line-height:10.5px;font-family:'Liberation Serif', serif;color:#f4f4f4;font-weight:normal;transform-origin:0 0;transform:scaleX(0.8496);">Click Volume</span>
<div style="left:71px;top:421px;width:135px;height:10.7px;background:#3f7e92;border:1px solid;border-color:#2c6677 #86bccb #86bccb #2c6677;"></div>
<div style="left:72px;top:422px;width:10px;height:8.7px;background:#4a90a6;border:1px solid;border-color:#86bccb #2c6677 #2c6677 #86bccb;"></div>
<div style="left:82px;top:422px;width:10px;height:8.7px;background:#4a90a6;border:1px solid;border-color:#86bccb #2c6677 #2c6677 #86bccb;"></div>
<div style="left:8.5px;top:435.5px;width:203px;height:2px;border-top:1px solid #2c6677;border-bottom:1px solid #86bccb;"></div>
<div style="left:18px;top:444px;width:55.5px;height:17px;border:1px solid;border-color:#2c6677 #86bccb #86bccb #2c6677;"></div>
<div style="left:20px;top:446px;width:51.5px;height:13px;background:#4a90a6;border:1px solid;border-color:#86bccb #2c6677 #2c6677 #86bccb;"></div>
<span id="t67" class="t" style="left:39.25px;top:447.95px;font-size:10.5px;line-height:10.5px;font-family:'Liberation Serif', serif;color:#f2f2f2;font-weight:normal;transform-origin:0 0;transform:scaleX(0.8568);">OK</span>
<div style="left:83.7px;top:446px;width:53.3px;height:13px;background:#4a90a6;border:1px solid;border-color:#86bccb #2c6677 #2c6677 #86bccb;"></div>
<span id="t68" class="t" style="left:97.35px;top:447.95px;font-size:10.5px;line-height:10.5px;font-family:'Liberation Serif', serif;color:#f2f2f2;font-weight:normal;transform-origin:0 0;transform:scaleX(0.8917);">Cancel</span>
<div style="left:149px;top:446px;width:59px;height:13px;background:#4a90a6;border:1px solid;border-color:#86bccb #2c6677 #2c6677 #86bccb;"></div>
<span id="t69" class="t" style="left:169.50px;top:447.95px;font-size:10.5px;line-height:10.5px;font-family:'Liberation Serif', serif;color:#f2f2f2;font-weight:normal;transform-origin:0 0;transform:scaleX(0.8814);">Help</span>
<div style="left:450.3px;top:225px;width:228.7px;height:241px;background:#eba771;border:1px solid;border-color:#f8d4b4 #a86c40 #a86c40 #f8d4b4;"></div>
<div style="left:453.3px;top:227px;width:222.7px;height:236px;background:#eba771;border:1px solid;border-color:#a86c40 #f8d4b4 #f8d4b4 #a86c40;"></div>
<div style="left:454.3px;top:228px;width:11px;height:11.5px;background:#eba771;border:1px solid;border-color:#f8d4b4 #a86c40 #a86c40 #f8d4b4;"></div>
<div style="left:456.8px;top:232.55px;width:6.5px;height:3px;background:#eba771;border:1px solid;border-color:#f8d4b4 #a86c40 #a86c40 #f8d4b4;"></div>
<div style="left:465.3px;top:228px;width:209.7px;height:11.5px;background:#eba771;border:1px solid;border-color:#f8d4b4 #a86c40 #a86c40 #f8d4b4;"></div>
<span id="t70" class="t" style="left:529.90px;top:229.20px;font-size:10.5px;line-height:10.5px;font-family:'Liberation Serif', serif;color:#f2f2f2;font-weight:normal;transform-origin:0 0;transform:scaleX(0.8143);">Style Manager - Mouse</span>
<div style="left:454.3px;top:239.5px;width:220.7px;height:222.5px;background:#4a90a6;"></div>
<div style="left:454.3px;top:239.5px;width:220.7px;height:222.5px;border:1px solid;border-color:#6aa8ba #2f6a7c #2f6a7c #6aa8ba;"></div>
<div style="left:627px;top:245px;width:44px;height:12.5px;background:#4a90a6;border:1px solid;border-color:#86bccb #2c6677 #2c6677 #86bccb;"></div>
<span id="t71" class="t" style="left:635.00px;top:246.70px;font-size:10.5px;line-height:10.5px;font-family:'Liberation Serif', serif;color:#f2f2f2;font-weight:normal;transform-origin:0 0;transform:scaleX(0.8889);">Default</span>
<div style="left:458.5px;top:244px;width:60.5px;height:99.5px;border:1px solid #2c6677;box-shadow:1px 1px 0 #86bccb, inset 1px 1px 0 #86bccb;"></div>
<svg style="left:462px;top:247.5px;overflow:visible" width="53" height="70" viewBox="0 0 53 70">
<rect x="0" y="0" width="53" height="70" fill="#5a8a96"/>
<rect x="0" y="0.0" width="53" height="1.3" fill="#6b9aa4"/><rect x="0" y="2.6" width="53" height="1.3" fill="#6b9aa4"/><rect x="0" y="5.2" width="53" height="1.3" fill="#6b9aa4"/><rect x="0" y="7.8" width="53" height="1.3" fill="#6b9aa4"/><rect x="0" y="10.4" width="53" height="1.3" fill="#6b9aa4"/><rect x="0" y="13.0" width="53" height="1.3" fill="#6b9aa4"/><rect x="0" y="15.6" width="53" height="1.3" fill="#6b9aa4"/><rect x="0" y="18.2" width="53" height="1.3" fill="#6b9aa4"/><rect x="0" y="20.8" width="53" height="1.3" fill="#6b9aa4"/><rect x="0" y="23.4" width="53" height="1.3" fill="#6b9aa4"/><rect x="0" y="26.0" width="53" height="1.3" fill="#6b9aa4"/><rect x="0" y="28.6" width="53" height="1.3" fill="#6b9aa4"/><rect x="0" y="31.2" width="53" height="1.3" fill="#6b9aa4"/><rect x="0" y="33.8" width="53" height="1.3" fill="#6b9aa4"/><rect x="0" y="36.4" width="53" height="1.3" fill="#6b9aa4"/><rect x="0" y="39.0" width="53" height="1.3" fill="#6b9aa4"/><rect x="0" y="41.6" width="53" height="1.3" fill="#6b9aa4"/><rect x="0" y="44.2" width="53" height="1.3" fill="#6b9aa4"/><rect x="0" y="46.8" width="53" height="1.3" fill="#6b9aa4"/><rect x="0" y="49.4" width="53" height="1.3" fill="#6b9aa4"/><rect x="0" y="52.0" width="53" height="1.3" fill="#6b9aa4"/><rect x="0" y="54.6" width="53" height="1.3" fill="#6b9aa4"/><rect x="0" y="57.2" width="53" height="1.3" fill="#6b9aa4"/><rect x="0" y="59.8" width="53" height="1.3" fill="#6b9aa4"/><rect x="0" y="62.4" width="53" height="1.3" fill="#6b9aa4"/><rect x="0" y="65.0" width="53" height="1.3" fill="#6b9aa4"/><rect x="0" y="67.6" width="53" height="1.3" fill="#6b9aa4"/><rect x="0" y="70.2" width="53" height="1.3" fill="#6b9aa4"/>
<rect x="0" y="0" width="53" height="70" fill="none" stroke="#3a6a78" stroke-width="1"/>
<path d="M9.5 21 H42 V62 C42 66 40 67.5 36 67.5 H14 C11 67.5 9.5 66 9.5 62 Z" fill="#1d4650"/>
<path d="M5.7 17 H38 C40 17 42 18 42 21 V58 C42 62 40 63 36 63 H10 C7 63 5.7 62 5.7 58 Z" fill="#b0d2da"/>
<g fill="#7ea8b2"><path d="M7 56 h1v1h-1z M9 56 h1v1h-1z M11 56 h1v1h-1z M13 56 h1v1h-1z M15 56 h1v1h-1z M17 56 h1v1h-1z M19 56 h1v1h-1z M21 56 h1v1h-1z M23 56 h1v1h-1z M25 56 h1v1h-1z M27 56 h1v1h-1z M29 56 h1v1h-1z M31 56 h1v1h-1z M33 56 h1v1h-1z M35 56 h1v1h-1z M37 56 h1v1h-1z M39 56 h1v1h-1z
M8 58 h1v1h-1z M10 58 h1v1h-1z M12 58 h1v1h-1z M14 58 h1v1h-1z M16 58 h1v1h-1z M18 58 h1v1h-1z M20 58 h1v1h-1z M22 58 h1v1h-1z M24 58 h1v1h-1z M26 58 h1v1h-1z M28 58 h1v1h-1z M30 58 h1v1h-1z M32 58 h1v1h-1z M34 58 h1v1h-1z M36 58 h1v1h-1z M38 58 h1v1h-1z
M7 60 h1v1h-1z M9 60 h1v1h-1z M11 60 h1v1h-1z M13 60 h1v1h-1z M15 60 h1v1h-1z M17 60 h1v1h-1z M19 60 h1v1h-1z M21 60 h1v1h-1z M23 60 h1v1h-1z M25 60 h1v1h-1z M27 60 h1v1h-1z M29 60 h1v1h-1z M31 60 h1v1h-1z M33 60 h1v1h-1z M35 60 h1v1h-1z M37 60 h1v1h-1z"/></g>
<rect x="9.7" y="20.5" width="13.3" height="12.3" fill="#c4e0e6" stroke="#1e3e48" stroke-width="1.2"/>
<rect x="25.3" y="20.5" width="13.5" height="12.3" fill="#c4e0e6" stroke="#1e3e48" stroke-width="1.2"/>
<text x="16.4" y="31" font-family="Liberation Sans" font-size="11" text-anchor="middle" fill="#1a3038">1</text>
<text x="32" y="31" font-family="Liberation Sans" font-size="11" text-anchor="middle" fill="#1a3038">2</text>
<path d="M16 33 V36.5 H32 V33 M24 36.5 V38.5" stroke="#1e3e48" fill="none" stroke-width="1"/>
<text x="24" y="48.5" font-family="Liberation Sans" font-weight="bold" font-size="11" text-anchor="middle" fill="#1a3038">3</text>
<path d="M5 8 H16 L22 6 L25 8 L24 14 M9 8 L6 12 M16 8 L19 14" stroke="#e8f2f4" stroke-width="1.1" fill="none"/>
<path d="M30 15 L29 9 M32 15 L32 6 M35 15 L35.5 5.5 M38 15 L39 7 M39.5 15 L42 11 M29 12 C29 16 40 17 40 13" stroke="#e8f2f4" stroke-width="1.3" fill="none"/>
</svg>
<span id="t72" class="t" style="left:463.00px;top:321.65px;font-size:10.5px;line-height:10.5px;font-family:'Liberation Serif', serif;color:#f4f4f4;font-weight:normal;transform-origin:0 0;transform:scaleX(0.9793);">Test</span>
<span id="t73" class="t" style="left:463.00px;top:330.45px;font-size:10.5px;line-height:10.5px;font-family:'Liberation Serif', serif;color:#f4f4f4;font-weight:normal;transform-origin:0 0;transform:scaleX(0.8276);">Double-Click</span>
<span id="t74" class="t" style="left:526.80px;top:271.95px;font-size:10.5px;line-height:10.5px;font-family:'Liberation Serif', serif;color:#f4f4f4;font-weight:normal;transform-origin:0 0;transform:scaleX(0.8946);">Handedness:</span>
<div style="left:581.8px;top:272.0px;width:9px;height:9px;border-radius:50%;background:#eba771;border:1px solid;border-color:#5a6a6a #f4c8a0 #f4c8a0 #5a6a6a;"></div>
<span id="t75" class="t" style="left:593.00px;top:271.95px;font-size:10.5px;line-height:10.5px;font-family:'Liberation Serif', serif;color:#f4f4f4;font-weight:normal;transform-origin:0 0;transform:scaleX(0.8139);">Right</span>
<div style="left:633px;top:272.3px;width:8.5px;height:8.5px;border-radius:50%;border:1px solid;border-color:#2c6677 #86bccb #86bccb #2c6677;"></div>
<span id="t76" class="t" style="left:644.50px;top:271.95px;font-size:10.5px;line-height:10.5px;font-family:'Liberation Serif', serif;color:#f4f4f4;font-weight:normal;transform-origin:0 0;transform:scaleX(0.8286);">Left</span>
<span id="t77" class="t" style="left:526.80px;top:290.95px;font-size:10.5px;line-height:10.5px;font-family:'Liberation Serif', serif;color:#f4f4f4;font-weight:normal;transform-origin:0 0;transform:scaleX(0.8682);">Button 2:</span>
<div style="left:581.8px;top:291.0px;width:9px;height:9px;border-radius:50%;background:#eba771;border:1px solid;border-color:#5a6a6a #f4c8a0 #f4c8a0 #5a6a6a;"></div>
<span id="t78" class="t" style="left:594.00px;top:290.95px;font-size:10.5px;line-height:10.5px;font-family:'Liberation Serif', serif;color:#f4f4f4;font-weight:normal;transform-origin:0 0;transform:scaleX(0.8806);">Transfer</span>
<div style="left:633px;top:291.3px;width:8.5px;height:8.5px;border-radius:50%;border:1px solid;border-color:#2c6677 #86bccb #86bccb #2c6677;"></div>
<span id="t79" class="t" style="left:644.50px;top:290.95px;font-size:10.5px;line-height:10.5px;font-family:'Liberation Serif', serif;color:#f4f4f4;font-weight:normal;transform-origin:0 0;transform:scaleX(0.8924);">Adjust</span>
<span id="t80" class="t" style="left:587.50px;top:347.95px;font-size:10.5px;line-height:10.5px;font-family:'Liberation Serif', serif;color:#f4f4f4;font-weight:normal;transform-origin:0 0;transform:scaleX(0.9143);">0.5</span>
<span id="t81" class="t" style="left:459.00px;top:363.20px;font-size:10.5px;line-height:10.5px;font-family:'Liberation Serif', serif;color:#f4f4f4;font-weight:normal;transform-origin:0 0;transform:scaleX(0.8311);">Double-Click</span>
<div style="left:517px;top:361px;width:153px;height:10px;background:#3f7e92;border:1px solid;border-color:#2c6677 #86bccb #86bccb #2c6677;"></div>
<div style="left:583px;top:362px;width:10.4px;height:8px;background:#4a90a6;border:1px solid;border-color:#86bccb #2c6677 #2c6677 #86bccb;"></div>
<div style="left:593.4px;top:362px;width:10.4px;height:8px;background:#4a90a6;border:1px solid;border-color:#86bccb #2c6677 #2c6677 #86bccb;"></div>
<span id="t82" class="t" style="left:552.00px;top:375.95px;font-size:10.5px;line-height:10.5px;font-family:'Liberation Serif', serif;color:#f4f4f4;font-weight:normal;transform-origin:0 0;transform:scaleX(0.9524);">2</span>
<span id="t83" class="t" style="left:461.00px;top:390.45px;font-size:10.5px;line-height:10.5px;font-family:'Liberation Serif', serif;color:#f4f4f4;font-weight:normal;transform-origin:0 0;transform:scaleX(0.8669);">Acceleration</span>
<div style="left:517px;top:388.5px;width:153px;height:10.0px;background:#3f7e92;border:1px solid;border-color:#2c6677 #86bccb #86bccb #2c6677;"></div>
<div style="left:544px;top:389.5px;width:10.4px;height:8.0px;background:#4a90a6;border:1px solid;border-color:#86bccb #2c6677 #2c6677 #86bccb;"></div>
<div style="left:554.4px;top:389.5px;width:10.4px;height:8.0px;background:#4a90a6;border:1px solid;border-color:#86bccb #2c6677 #2c6677 #86bccb;"></div>
<span id="t84" class="t" style="left:560.20px;top:402.95px;font-size:10.5px;line-height:10.5px;font-family:'Liberation Serif', serif;color:#f4f4f4;font-weight:normal;transform-origin:0 0;transform:scaleX(0.9524);">4</span>
<span id="t85" class="t" style="left:469.00px;top:417.95px;font-size:10.5px;line-height:10.5px;font-family:'Liberation Serif', serif;color:#f4f4f4;font-weight:normal;transform-origin:0 0;transform:scaleX(0.8925);">Threshold</span>
<div style="left:517px;top:416.6px;width:153px;height:10.0px;background:#3f7e92;border:1px solid;border-color:#2c6677 #86bccb #86bccb #2c6677;"></div>
<div style="left:553px;top:417.6px;width:10.4px;height:8.0px;background:#4a90a6;border:1px solid;border-color:#86bccb #2c6677 #2c6677 #86bccb;"></div>
<div style="left:563.4px;top:417.6px;width:10.4px;height:8.0px;background:#4a90a6;border:1px solid;border-color:#86bccb #2c6677 #2c6677 #86bccb;"></div>
<div style="left:453.5px;top:431.5px;width:221.5px;height:2px;border-top:1px solid #2c6677;border-bottom:1px solid #86bccb;"></div>
<div style="left:460px;top:437.5px;width:67px;height:21px;border:1px solid #eba771;"></div>
<div style="left:462px;top:439px;width:63px;height:17px;border:1px solid;border-color:#2c6677 #86bccb #86bccb #2c6677;"></div>
<div style="left:464px;top:441px;width:59px;height:13px;background:#4a90a6;border:1px solid;border-color:#86bccb #2c6677 #2c6677 #86bccb;"></div>
<span id="t86" class="t" style="left:487.00px;top:442.95px;font-size:10.5px;line-height:10.5px;font-family:'Liberation Serif', serif;color:#f2f2f2;font-weight:normal;transform-origin:0 0;transform:scaleX(0.8568);">OK</span>
<div style="left:535px;top:441px;width:59px;height:13px;background:#4a90a6;border:1px solid;border-color:#86bccb #2c6677 #2c6677 #86bccb;"></div>
<span id="t87" class="t" style="left:551.50px;top:442.95px;font-size:10.5px;line-height:10.5px;font-family:'Liberation Serif', serif;color:#f2f2f2;font-weight:normal;transform-origin:0 0;transform:scaleX(0.8917);">Cancel</span>
<div style="left:606px;top:441px;width:59px;height:13px;background:#4a90a6;border:1px solid;border-color:#86bccb #2c6677 #2c6677 #86bccb;"></div>
<span id="t88" class="t" style="left:626.50px;top:442.95px;font-size:10.5px;line-height:10.5px;font-family:'Liberation Serif', serif;color:#f2f2f2;font-weight:normal;transform-origin:0 0;transform:scaleX(0.8814);">Help</span>
<div style="left:17px;top:470px;width:666.5px;height:59px;background:#9b9b9b;border:1px solid;border-color:#cfcfcf #585858 #585858 #cfcfcf;"></div>
<div style="left:20.5px;top:474px;width:14px;height:9.5px;background:#9b9b9b;border:1px solid;border-color:#c8c8c8 #585858 #585858 #c8c8c8;"></div>
<div style="left:23.5px;top:477.5px;width:8px;height:2px;background:#c8c8c8;box-shadow:1px 1px 0 #585858;"></div>
<div style="left:20.5px;top:483.5px;width:14px;height:41px;background:repeating-linear-gradient(to bottom,#acacac 0,#acacac 1.5px,#868686 1.5px,#868686 3px);border-right:1px solid #5a5a5a;"></div>
<div style="left:34.5px;top:484px;width:203.5px;height:40.5px;background:#c6b3aa;"></div>
<div style="left:34.5px;top:473.5px;width:203.5px;height:10.5px;background:#9a9a9a;border-top:1px solid #c8c8c8;"></div>
<div style="left:71.5px;top:474.5px;width:1px;height:9.5px;background:#606060;"></div>
<div style="left:72.5px;top:474.5px;width:1px;height:9.5px;background:#c8c8c8;"></div>
<div style="left:111px;top:474.5px;width:1px;height:9.5px;background:#606060;"></div>
<div style="left:112px;top:474.5px;width:1px;height:9.5px;background:#c8c8c8;"></div>
<div style="left:152px;top:474.5px;width:1px;height:9.5px;background:#606060;"></div>
<div style="left:153px;top:474.5px;width:1px;height:9.5px;background:#c8c8c8;"></div>
<div style="left:192px;top:474.5px;width:1px;height:9.5px;background:#606060;"></div>
<div style="left:193px;top:474.5px;width:1px;height:9.5px;background:#c8c8c8;"></div>
<div style="left:233.5px;top:474.5px;width:1px;height:9.5px;background:#606060;"></div>
<div style="left:234.5px;top:474.5px;width:1px;height:9.5px;background:#c8c8c8;"></div>
<div style="left:34.5px;top:484px;width:203.5px;height:1px;background:#a8c8d0;"></div>
<div style="left:34.5px;top:484px;width:1px;height:40.5px;background:#a8c8d0;"></div>
<svg style="left:168px;top:476px;overflow:visible" width="13" height="6" viewBox="0 0 13 6"><path d="M1 5.5 L6.5 1 L12 5.5 Z" fill="#b4b4b4" stroke="#d8d8d8" stroke-width="0.9"/></svg>
<div style="left:238px;top:474px;width:224.5px;height:50.5px;background:#c6b3aa;"></div>
<div style="left:238px;top:474px;width:1px;height:50.5px;background:#a8c8d0;"></div>
<div style="left:261.5px;top:474px;width:178.5px;height:50.5px;background:#4a90a6;"></div>
<div style="left:265px;top:478px;width:84px;height:19.2px;background:#8c9cb2;border:2px solid;border-color:#384050 #dfe4ea #dfe4ea #384050;"></div>
<span id="t89" class="t" style="left:271.00px;top:482.55px;font-size:11.5px;line-height:11.5px;font-family:'Liberation Serif', serif;color:#f2f2f2;font-weight:normal;transform-origin:0 0;transform:scaleX(0.9389);text-shadow:0.8px 0.8px 0 #505050;">One</span>
<div style="left:353.5px;top:478px;width:84px;height:19.2px;background:#c9b3aa;border:2px solid;border-color:#ece0da #6e605a #6e605a #ece0da;"></div>
<span id="t90" class="t" style="left:359.50px;top:482.55px;font-size:11.5px;line-height:11.5px;font-family:'Liberation Serif', serif;color:#f2f2f2;font-weight:normal;transform-origin:0 0;transform:scaleX(0.9368);text-shadow:0.8px 0.8px 0 #505050;">Two</span>
<div style="left:265px;top:501.3px;width:84px;height:19.4px;background:#4a90a6;border:2px solid;border-color:#a8d4e0 #1e4a58 #1e4a58 #a8d4e0;"></div>
<span id="t91" class="t" style="left:271.00px;top:505.95px;font-size:11.5px;line-height:11.5px;font-family:'Liberation Serif', serif;color:#f2f2f2;font-weight:normal;transform-origin:0 0;transform:scaleX(1.0064);text-shadow:0.8px 0.8px 0 #505050;">Three</span>
<div style="left:353.5px;top:501.3px;width:84px;height:19.4px;background:#b9838b;border:2px solid;border-color:#e6c4c8 #6a4048 #6a4048 #e6c4c8;"></div>
<span id="t92" class="t" style="left:359.50px;top:505.95px;font-size:11.5px;line-height:11.5px;font-family:'Liberation Serif', serif;color:#f2f2f2;font-weight:normal;transform-origin:0 0;transform:scaleX(1.1042);text-shadow:0.8px 0.8px 0 #505050;">Four</span>
<div style="left:442px;top:482px;width:16px;height:3.5px;background:#c8d040;border:1px solid #707020;"></div>
<div style="left:443px;top:505.3px;width:16px;height:11.5px;background:#c8c8c8;border:1px solid;border-color:#f0f0f0 #444 #444 #f0f0f0;"></div>
<span id="t93" class="t" style="left:444.50px;top:507.65px;font-size:8.5px;line-height:8.5px;font-family:'Liberation Sans', sans-serif;color:#1a1a1a;font-weight:bold;transform-origin:0 0;transform:scaleX(0.6876);">EXIT</span>
<svg style="left:244px;top:479px;overflow:visible" width="11" height="13" viewBox="0 0 11 13"><path d="M2.5 6 V3.5 C2.5 1 8.5 1 8.5 3.5 V6" stroke="#555" stroke-width="1.5" fill="none"/><rect x="0.5" y="6" width="10" height="6.5" fill="#8a8a8a" stroke="#444" stroke-width="0.8"/></svg>
<div style="left:462px;top:484px;width:204.5px;height:40.5px;background:#c6b3aa;"></div>
<div style="left:462px;top:474px;width:1px;height:50.5px;background:#5f5f5f;"></div>
<div style="left:463px;top:473.5px;width:203px;height:10.5px;background:#9a9a9a;border-top:1px solid #c8c8c8;"></div>
<div style="left:467.7px;top:474.5px;width:1px;height:9.5px;background:#606060;"></div>
<div style="left:468.7px;top:474.5px;width:1px;height:9.5px;background:#c8c8c8;"></div>
<div style="left:507.5px;top:474.5px;width:1px;height:9.5px;background:#606060;"></div>
<div style="left:508.5px;top:474.5px;width:1px;height:9.5px;background:#c8c8c8;"></div>
<div style="left:545.7px;top:474.5px;width:1px;height:9.5px;background:#606060;"></div>
<div style="left:546.7px;top:474.5px;width:1px;height:9.5px;background:#c8c8c8;"></div>
<div style="left:584.6px;top:474.5px;width:1px;height:9.5px;background:#606060;"></div>
<div style="left:585.6px;top:474.5px;width:1px;height:9.5px;background:#c8c8c8;"></div>
<div style="left:625px;top:474.5px;width:1px;height:9.5px;background:#606060;"></div>
<div style="left:626px;top:474.5px;width:1px;height:9.5px;background:#c8c8c8;"></div>
<div style="left:463px;top:484px;width:203px;height:1px;background:#a8c8d0;"></div>
<svg style="left:483px;top:476px;overflow:visible" width="13" height="6" viewBox="0 0 13 6"><path d="M1 5.5 L6.5 1 L12 5.5 Z" fill="#b4b4b4" stroke="#d8d8d8" stroke-width="0.9"/></svg>
<svg style="left:600px;top:476px;overflow:visible" width="13" height="6" viewBox="0 0 13 6"><path d="M1 5.5 L6.5 1 L12 5.5 Z" fill="#b4b4b4" stroke="#d8d8d8" stroke-width="0.9"/></svg>
<div style="left:666px;top:474px;width:14px;height:9.5px;background:#9b9b9b;border:1px solid;border-color:#c8c8c8 #585858 #585858 #c8c8c8;"></div>
<div style="left:671.5px;top:477.3px;width:3.2px;height:3.2px;background:#777;border:1px solid;border-color:#d8d8d8 #444 #444 #d8d8d8;border-radius:1px;"></div>
<div style="left:666px;top:483.5px;width:14px;height:41px;background:repeating-linear-gradient(to bottom,#acacac 0,#acacac 1.5px,#868686 1.5px,#868686 3px);border-right:1px solid #5a5a5a;"></div>
<svg style="left:40px;top:491px;overflow:visible" width="28" height="28" viewBox="0 0 28 28">
<rect x="0.5" y="0.5" width="27" height="27" rx="3" fill="none" stroke="#f0e6e0" stroke-width="1"/>
<rect x="1.5" y="1.5" width="25" height="25" rx="2.5" fill="none" stroke="#8a7a74" stroke-width="0.7"/>
<path d="M8 3 H20 L25 8 V20 L20 25 H8 L3 20 V8 Z" fill="#b09a94"/>
<g fill="#fbfbfb"><circle cx="14" cy="2.3" r="1.1"/><circle cx="14" cy="25.6" r="1.1"/><circle cx="2.3" cy="14" r="1.1"/><circle cx="25.7" cy="14" r="1.1"/></g>
<g fill="#e8dcd6"><circle cx="20" cy="3.5" r="0.5"/><circle cx="24.5" cy="8" r="0.5"/><circle cx="24.5" cy="20" r="0.5"/><circle cx="20" cy="24.5" r="0.5"/><circle cx="8" cy="24.5" r="0.5"/><circle cx="3.5" cy="20" r="0.5"/><circle cx="3.5" cy="8" r="0.5"/><circle cx="8" cy="3.5" r="0.5"/></g>
<path d="M14 14 L17 3.5 M14 14 L21 18.5" stroke="#9cd4e4" stroke-width="1.6" fill="none"/>
</svg>
<svg style="left:80px;top:489.5px;overflow:visible" width="24" height="29" viewBox="0 0 24 29">
<rect x="0" y="0" width="24" height="29" fill="#c6c6c6"/>
<path d="M0.5 28.5 V0.5 H23.5" stroke="#ececec" stroke-width="1" fill="none"/>
<path d="M23.5 0.5 V28.5 H0.5" stroke="#4a4a4a" stroke-width="1" fill="none"/>
<path d="M1 1 L5 1 L1 5 Z" fill="#f4f4f4"/><path d="M23 1 L19 1 L23 5 Z" fill="#f4f4f4"/>
<path d="M23 28 L18 28 L23 23 Z" fill="#eeeeee" stroke="#555" stroke-width="0.5"/>
<text x="12.3" y="12.5" font-family="Liberation Serif" font-size="10.5" text-anchor="middle" fill="#1e1e1e">Jul</text>
<text x="12.3" y="23.8" font-family="Liberation Serif" font-size="10" text-anchor="middle" fill="#1e1e1e">27</text>
</svg>
<svg style="left:117px;top:487px;overflow:visible" width="30" height="32" viewBox="0 0 30 32">
<rect x="1.3" y="7.3" width="8" height="3" fill="#5a5050"/>
<path d="M8 10 L19.8 1.3 L25.2 10 Z" fill="#e8e8e8" stroke="#999" stroke-width="0.5"/>
<path d="M13.5 5.5 L19 2" stroke="#1030f0" stroke-width="2"/>
<rect x="4.2" y="14" width="25" height="17.5" fill="#6e625c" opacity="0.6"/>
<rect x="2.4" y="12" width="25" height="18" fill="#b6b6b6"/>
<path d="M2.9 30 V12.5 H27" stroke="#dedede" stroke-width="1" fill="none"/>
<rect x="3" y="10" width="5" height="2" fill="#f02030"/><rect x="8" y="10" width="6" height="2" fill="#f030f0"/><rect x="14" y="10" width="5.6" height="2" fill="#30d030"/><rect x="19.6" y="10" width="5.4" height="2" fill="#30e0e0"/>
<rect x="10" y="14.4" width="10.3" height="6" fill="#e0e0e0"/>
<rect x="10.5" y="15" width="9.3" height="2.5" fill="#f08a10"/><rect x="10.5" y="17.5" width="9.3" height="2.3" fill="#202020"/>
</svg>
<svg style="left:159px;top:489px;overflow:visible" width="29" height="30" viewBox="0 0 29 30">
<rect x="0.6" y="1" width="20.2" height="26" fill="#dcdcdc"/>
<path d="M1 27 V1 H20.8" stroke="#f4f4f4" stroke-width="1" fill="none"/>
<path d="M20.8 1 V27 H1" stroke="#555" stroke-width="1" fill="none"/>
<g stroke="#333" stroke-width="0.8" stroke-dasharray="1.2 0.6"><path d="M3 5.5 H16 M3 8.5 H17 M3 11.5 H12"/></g>
<path d="M11 12 L26.5 26" stroke="#333" stroke-width="4"/>
<path d="M11.5 12.5 L25.5 25" stroke="#eee040" stroke-width="2.2"/>
<path d="M24.5 24.2 L27 27" stroke="#e040e0" stroke-width="2.6"/>
<path d="M10.5 11.5 L13 13.5" stroke="#222" stroke-width="2"/>
</svg>
<svg style="left:196px;top:496px;overflow:visible" width="34" height="22" viewBox="0 0 34 22">
<rect x="4.3" y="0.7" width="24.7" height="13.5" fill="#e4e4e4"/>
<rect x="4.3" y="0.7" width="24.7" height="2" fill="#a8a8a8"/>
<rect x="22" y="4" width="3" height="3" fill="#e05050"/><rect x="25" y="4" width="2.5" height="3" fill="#30c040"/>
<path d="M6 5 V7" stroke="#888" stroke-width="0.8"/>
<path d="M0.4 10 H5 V14 H29 V10 H32.5 V19 C32.5 20.5 31.5 21 30 21 H3 C1.5 21 0.4 20.5 0.4 19 Z" fill="#a8a8a8"/>
<path d="M0.9 19 V10.5 H5 M29 10.5 H32" stroke="#e8e8e8" stroke-width="1" fill="none"/>
<path d="M5 14 V16 H29 V14" stroke="#eee" stroke-width="0.8" fill="none"/>
</svg>
<svg style="left:474.5px;top:497.5px;overflow:visible" width="28" height="18" viewBox="0 0 28 18">
<rect x="5.3" y="0.5" width="13.5" height="3.5" fill="#f4f4f4" stroke="#999" stroke-width="0.5"/>
<rect x="0.4" y="3.2" width="27" height="10.3" rx="1.5" fill="#d8d8d8"/>
<path d="M0.9 13 V3.7 H27" stroke="#f4f4f4" stroke-width="1" fill="none"/>
<g fill="#a0a0a0"><rect x="2" y="7" width="24" height="1"/><rect x="2" y="9.5" width="24" height="1"/></g>
<rect x="2.5" y="12.9" width="20.7" height="4.9" rx="1.5" fill="#4e4e4e"/>
</svg>
<svg style="left:510.5px;top:490.5px;overflow:visible" width="33" height="27" viewBox="0 0 33 27">
<rect x="4" y="0.4" width="25" height="12.5" fill="#b0b0b0"/>
<path d="M4.5 12.5 V0.9 H29" stroke="#e0e0e0" stroke-width="1" fill="none"/>
<rect x="7" y="3.6" width="8" height="5" fill="#c4c4c4" stroke="#777" stroke-width="0.5"/><rect x="9" y="5.6" width="4" height="1.2" fill="#555"/>
<path d="M0.8 6 H6" stroke="#777" stroke-width="0.8"/>
<rect x="0.8" y="10.7" width="10.3" height="16.3" rx="3.5" fill="#c8c8c8" stroke="#888" stroke-width="0.5"/>
<path d="M3.5 12 V16 M6 12 V16" stroke="#777" stroke-width="0.6"/>
<path d="M18 5 C18 2 26 1.5 31 3 C33.5 4 33 8 30 9 C28 9.8 27 11 25 12.3 C22 13.5 18 12 17.6 9 Z" fill="#c4c4c4" stroke="#666" stroke-width="0.5"/>
<circle cx="22.5" cy="5" r="1.8" fill="#ffe000"/><circle cx="27" cy="3.6" r="1.5" fill="#ff20ff"/><circle cx="19.5" cy="8.2" r="1.6" fill="#ff1010"/><circle cx="23.5" cy="9.6" r="1.7" fill="#1020ff"/><circle cx="28" cy="8.5" r="1.4" fill="#10c040"/>
<text x="16" y="25.5" font-family="Liberation Serif" font-weight="bold" font-size="15" fill="#222">T</text><text x="15" y="24.5" font-family="Liberation Serif" font-weight="bold" font-size="15" fill="#f4f4f4">T</text>
<text x="25.5" y="26" font-family="Liberation Serif" font-weight="bold" font-size="10" fill="#222">T</text><text x="24.8" y="25.3" font-family="Liberation Serif" font-weight="bold" font-size="10" fill="#f4f4f4">T</text>
</svg>
<svg style="left:552.5px;top:489.5px;overflow:visible" width="28" height="29" viewBox="0 0 28 29">
<rect x="3.8" y="0.8" width="3.3" height="9.5" fill="#e0e0e0" stroke="#999" stroke-width="0.5"/>
<rect x="9.8" y="0.3" width="8.1" height="9.5" fill="#8a8a8a"/><rect x="11" y="1.5" width="5.5" height="2.5" fill="#444"/><rect x="11" y="5" width="5.5" height="1" fill="#ccc"/>
<path d="M18 9.5 L25 2.5" stroke="#333" stroke-width="2.6"/><path d="M18.2 9.3 L24.6 2.8" stroke="#eee040" stroke-width="1.6"/><circle cx="25" cy="2" r="1.2" fill="#e040e0"/>
<rect x="2.5" y="11" width="25.5" height="18" fill="#6e625c" opacity="0.55"/>
<rect x="0" y="9" width="26" height="19" fill="#b2b2b2"/>
<path d="M0.5 28 V9.5 H26" stroke="#dcdcdc" stroke-width="1" fill="none"/>
<rect x="8.2" y="12.8" width="9.7" height="5" fill="#e0e0e0"/>
<rect x="8.7" y="13.3" width="8.7" height="2.2" fill="#50e050"/><rect x="8.7" y="15.5" width="8.7" height="2" fill="#202020"/>
</svg>
<svg style="left:592.5px;top:494.5px;overflow:visible" width="26" height="22" viewBox="0 0 26 22">
<rect x="0.3" y="2" width="3.5" height="20" fill="#d4d4d4"/><path d="M0.6 22 V2.3 H3.8" stroke="#f0f0f0" stroke-width="0.8" fill="none"/>
<rect x="3.8" y="3" width="1.2" height="19" fill="#555"/>
<rect x="5" y="0.3" width="3" height="21.7" fill="#30c0c0"/><rect x="8" y="1" width="1.5" height="21" fill="#c01818"/>
<rect x="9.5" y="1.5" width="5.5" height="20.5" fill="#7a7a7a"/><rect x="15" y="1" width="1.3" height="21" fill="#555"/>
<rect x="16.3" y="1.3" width="3.5" height="20.7" fill="#3030a0"/><rect x="19.8" y="2" width="1" height="20" fill="#444"/>
<rect x="20.8" y="1" width="5" height="21" fill="#9a9a9a"/><path d="M21.2 22 V1.3 H25.5" stroke="#c8c8c8" stroke-width="0.8" fill="none"/>
<text x="13" y="16" font-family="Liberation Sans" font-weight="bold" font-size="13" text-anchor="middle" fill="#222">?</text>
<text x="12.3" y="15.3" font-family="Liberation Sans" font-weight="bold" font-size="13" text-anchor="middle" fill="#ffffff">?</text>
</svg>
<svg style="left:638px;top:494px;overflow:visible" width="17" height="24" viewBox="0 0 17 24">
<path d="M0.5 3.5 C0.5 1 1.5 0.5 3.5 0.5 H12.5 C14.5 0.5 15.5 1 15.5 3.5 V22.5 C15.5 23.2 15 23.5 14.3 23.5 H1.7 C1 23.5 0.5 23.2 0.5 22.5 Z" fill="#aeaeae" stroke="#555" stroke-width="0.8"/>
<path d="M1.3 22.5 V3.5 C1.3 2 2 1.3 3.5 1.3 H12" stroke="#e0e0e0" stroke-width="1" fill="none"/>
<rect x="1" y="4.3" width="14" height="1" fill="#777"/>
<rect x="6" y="20" width="5" height="2.4" fill="#222"/>
</svg>
</body></html>
